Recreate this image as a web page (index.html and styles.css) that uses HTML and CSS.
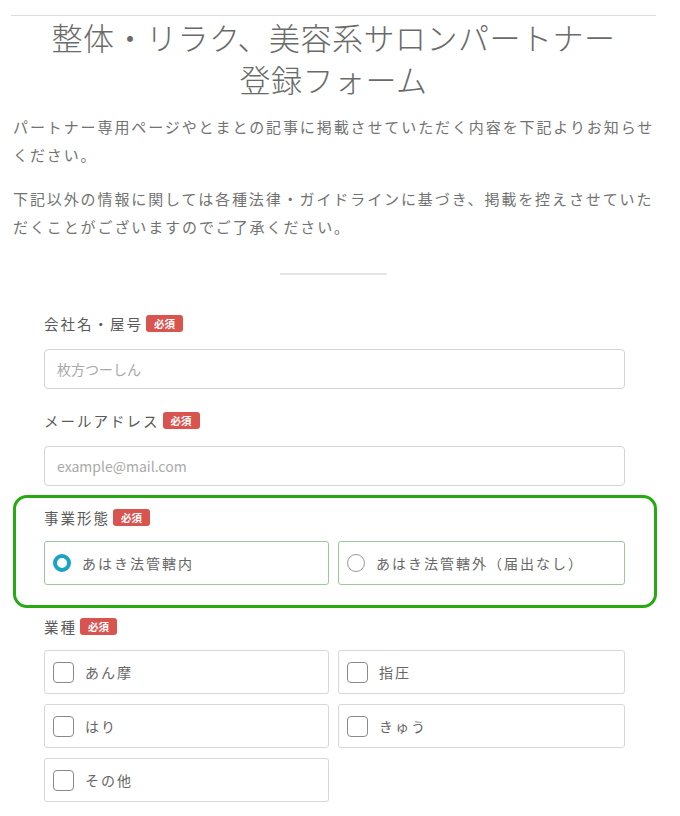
FILE: index.html
```html
<!DOCTYPE html>
<html lang="ja">
<head>
<meta charset="utf-8">
<title>登録フォーム</title>
<link rel="stylesheet" href="styles.css">
</head>
<body>
<div class="page">
  <hr class="top-rule">
  <h1 class="title">整体・リラク、美容系サロンパートナー<br>登録フォーム</h1>
  <p class="lead">パートナー専用ページやとまとの記事に掲載させていただく内容を下記よりお知らせください。</p>
  <p class="lead">下記以外の情報に関しては各種法律・ガイドラインに基づき、掲載を控えさせていただくことがございますのでご了承ください。</p>
  <div class="divider"></div>

  <form class="form">
    <div class="field">
      <div class="label">会社名・屋号<span class="badge">必須</span></div>
      <input class="input" type="text" placeholder="枚方つーしん">
    </div>
    <div class="field">
      <div class="label">メールアドレス<span class="badge">必須</span></div>
      <input class="input" type="text" placeholder="example@mail.com">
    </div>
    <div class="field highlight">
      <div class="label">事業形態<span class="badge">必須</span></div>
      <div class="options">
        <div class="option radio-opt"><span class="radio checked"></span><span class="opt-text">あはき法管轄内</span></div>
        <div class="option radio-opt"><span class="radio"></span><span class="opt-text">あはき法管轄外（届出なし）</span></div>
      </div>
    </div>
    <div class="field">
      <div class="label">業種<span class="badge">必須</span></div>
      <div class="options checks">
        <div class="option"><span class="check"></span><span class="opt-text">あん摩</span></div>
        <div class="option"><span class="check"></span><span class="opt-text">指圧</span></div>
        <div class="option"><span class="check"></span><span class="opt-text">はり</span></div>
        <div class="option"><span class="check"></span><span class="opt-text">きゅう</span></div>
        <div class="option"><span class="check"></span><span class="opt-text">その他</span></div>
      </div>
    </div>
  </form>
</div>
</body>
</html>
```

FILE: styles.css
```css
* { box-sizing: border-box; }
html, body { margin: 0; padding: 0; background: #fff; }
body {
  font-family: "Noto Sans CJK JP", "Noto Sans", sans-serif;
  color: #666;
}
.page {
  width: 645px;
  margin-left: 11px;
  padding-top: 15px;
}
.top-rule {
  margin: 0;
  border: 0;
  height: 1px;
  background: #dcdcdc;
}
.title {
  margin: 0;
  font-size: 31px;
  line-height: 42px;
  font-weight: 300;
  color: #6a6a6a;
  text-align: center;
  letter-spacing: 0.5px;
}
.lead {
  margin: 13px 0 0 2px;
  font-size: 15px;
  line-height: 28px;
  letter-spacing: 1.9px;
  color: #727272;
}
.lead + .lead { margin-top: 16px; }
.divider {
  width: 107px;
  height: 2px;
  background: #e4e4e4;
  margin: 32px 0 0 269px;
}
.form {
  margin: 36px 0 0 33px;
  width: 581px;
}
.field {
  display: flex;
  flex-direction: column;
  margin-bottom: 19px;
}
.label {
  display: flex;
  align-items: center;
  height: 24px;
  font-size: 14.5px;
  letter-spacing: 2px;
  color: #5a5a5a;
  margin-bottom: 12px;
}
.badge {
  display: inline-flex;
  align-items: center;
  justify-content: center;
  width: 37px;
  height: 17px;
  margin-left: 3px;
  background: #d9534f;
  color: #fff;
  border-radius: 3px;
  font-size: 10.5px;
  font-weight: 700;
  letter-spacing: 0;
}
.input {
  display: block;
  width: 100%;
  height: 40px;
  margin-top: 2px;
  border: 1px solid #d4d4d4;
  border-radius: 4px;
  padding: 0 12px;
  font-family: inherit;
  font-size: 14px;
  color: #555;
  background: #fff;
}
.input::placeholder { color: #a9a9a9; }
.field:nth-child(2) { margin-bottom: 9px; }
.highlight {
  margin: 0 -32px 6px -31px;
  padding: 7px 32px 20px 28px;
  border: 3px solid #27a912;
  border-radius: 14px;
}
.options {
  display: grid;
  grid-template-columns: 285px 287px;
  column-gap: 9px;
  row-gap: 10px;
}
.option {
  display: flex;
  align-items: center;
  height: 44px;
  border: 1px solid #d8d8d8;
  border-radius: 3px;
  padding-left: 8px;
  background: #fff;
}
.radio-opt { border-color: #9ec79e; }
.radio {
  width: 18px;
  height: 18px;
  border-radius: 50%;
  border: 1px solid #9a9a9a;
  flex: none;
}
.radio.checked {
  border: 4px solid #1aa3c4;
}
.check {
  width: 21px;
  height: 21px;
  border: 1.5px solid #8a8a8a;
  border-radius: 4px;
  flex: none;
}
.opt-text {
  margin-left: 11px;
  font-size: 14px;
  letter-spacing: 2px;
  color: #666;
}
```
